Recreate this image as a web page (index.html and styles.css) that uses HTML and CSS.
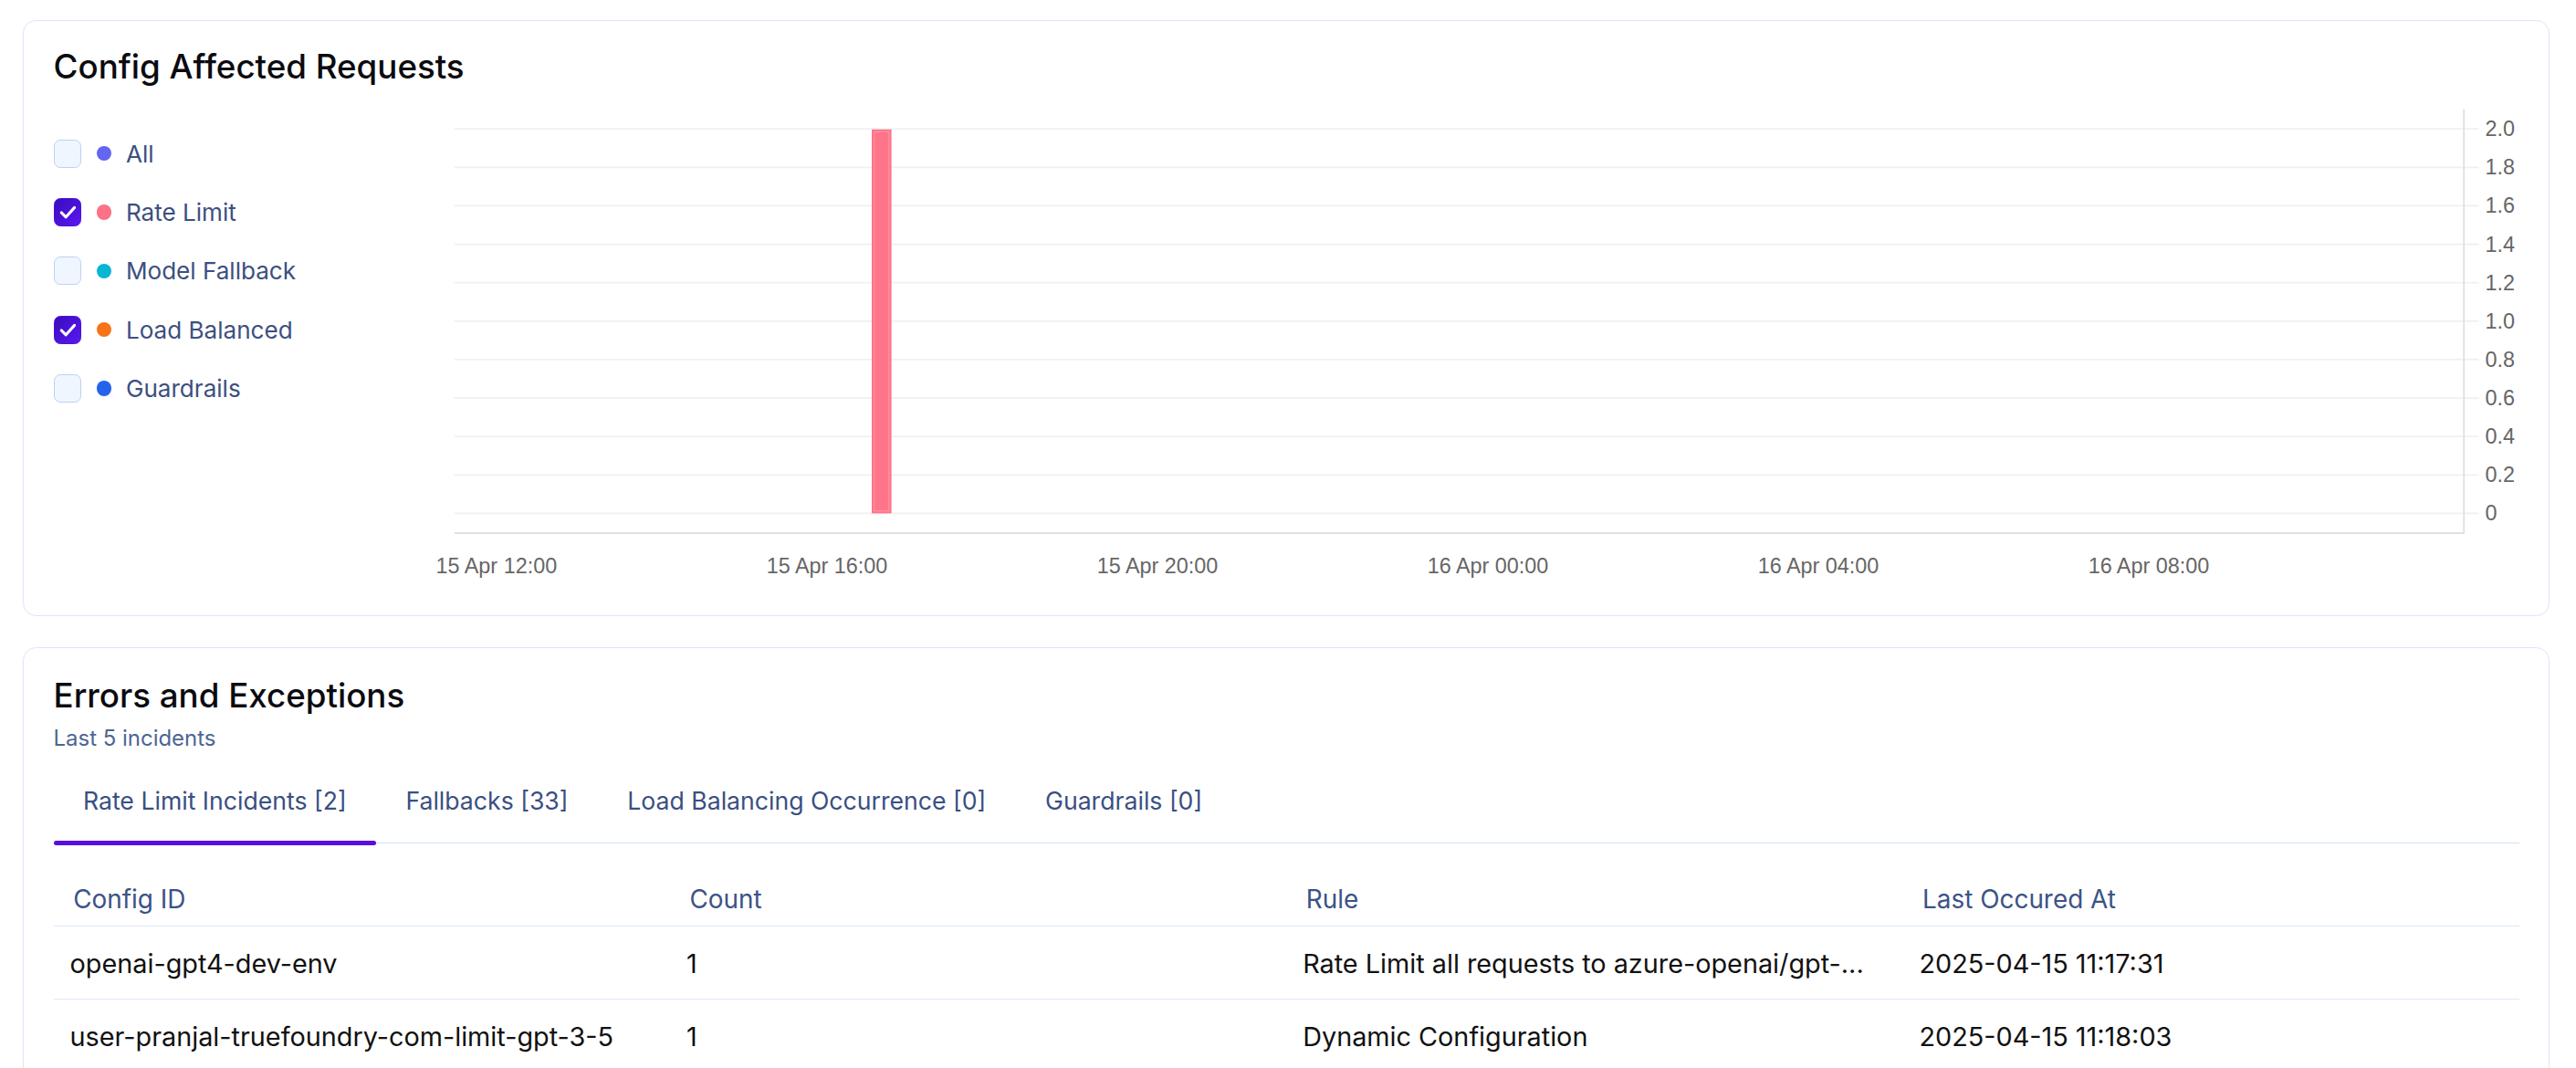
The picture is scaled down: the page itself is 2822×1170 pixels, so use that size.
FILE: index.html
```html
<!DOCTYPE html>
<html lang="en">
<head>
  <meta charset="UTF-8">
  <meta name="viewport" content="width=device-width, initial-scale=1.0">
  <title>Config Metrics</title>
  <link rel="stylesheet" href="styles.css">
</head>
<body>
  <div class="page">
    <div class="card">
      <h2 class="cardTitle">Config Affected Requests</h2>
      <div class="chartRow">
        <ul class="legend">
          <li><span class="box"></span><i class="dot" style="background:#6366f1"></i>All</li>
          <li><span class="box on"><svg viewBox="0 0 16 16"><polyline points="4,8.3 6.8,11 12,5.2"/></svg></span><i class="dot" style="background:#fb7185"></i>Rate Limit</li>
          <li><span class="box"></span><i class="dot" style="background:#06b6d4"></i>Model Fallback</li>
          <li><span class="box on"><svg viewBox="0 0 16 16"><polyline points="4,8.3 6.8,11 12,5.2"/></svg></span><i class="dot" style="background:#f97316"></i>Load Balanced</li>
          <li><span class="box"></span><i class="dot" style="background:#2563eb"></i>Guardrails</li>
        </ul>
        <svg class="chart" width="1283" height="300" viewBox="0 0 1283 300">
          <g class="grid">
            <line x1="26" x2="1258" y1="19" y2="19"/>
            <line x1="26" x2="1258" y1="42.4" y2="42.4"/>
            <line x1="26" x2="1258" y1="65.8" y2="65.8"/>
            <line x1="26" x2="1258" y1="89.2" y2="89.2"/>
            <line x1="26" x2="1258" y1="112.6" y2="112.6"/>
            <line x1="26" x2="1258" y1="136" y2="136"/>
            <line x1="26" x2="1258" y1="159.4" y2="159.4"/>
            <line x1="26" x2="1258" y1="182.8" y2="182.8"/>
            <line x1="26" x2="1258" y1="206.2" y2="206.2"/>
            <line x1="26" x2="1258" y1="229.6" y2="229.6"/>
            <line x1="26" x2="1258" y1="253" y2="253"/>
          </g>
          <g class="axis">
            <line x1="1249" x2="1249" y1="7" y2="265.5"/>
            <line x1="26" x2="1249" y1="265" y2="265"/>
          </g>
          <rect class="bar" x="280" y="19.3" width="12" height="233.7"/>
          <rect class="barEdge" x="281.5" y="20.8" width="9" height="230.7"/>
          <g class="ylabels">
            <text x="1262" y="19">2.0</text>
            <text x="1262" y="42.4">1.8</text>
            <text x="1262" y="65.8">1.6</text>
            <text x="1262" y="89.2">1.4</text>
            <text x="1262" y="112.6">1.2</text>
            <text x="1262" y="136">1.0</text>
            <text x="1262" y="159.4">0.8</text>
            <text x="1262" y="182.8">0.6</text>
            <text x="1262" y="206.2">0.4</text>
            <text x="1262" y="229.6">0.2</text>
            <text x="1262" y="253">0</text>
          </g>
          <g class="xlabels">
            <text x="51.6" y="289.5">15 Apr 12:00</text>
            <text x="252.8" y="289.5">15 Apr 16:00</text>
            <text x="453.9" y="289.5">15 Apr 20:00</text>
            <text x="655" y="289.5">16 Apr 00:00</text>
            <text x="856.1" y="289.5">16 Apr 04:00</text>
            <text x="1057.2" y="289.5">16 Apr 08:00</text>
          </g>
        </svg>
      </div>
    </div>

    <div class="card">
      <h2 class="cardTitle">Errors and Exceptions</h2>
      <p class="sub">Last 5 incidents</p>
      <div class="tabs">
        <span class="tab active">Rate Limit Incidents [2]</span>
        <span class="tab">Fallbacks [33]</span>
        <span class="tab">Load Balancing Occurrence [0]</span>
        <span class="tab">Guardrails [0]</span>
      </div>
      <table class="incidents">
        <thead>
          <tr><th>Config ID</th><th>Count</th><th>Rule</th><th>Last Occured At</th></tr>
        </thead>
        <tbody>
          <tr><td>openai-gpt4-dev-env</td><td>1</td><td>Rate Limit all requests to azure-openai/gpt-...</td><td>2025-04-15 11:17:31</td></tr>
          <tr><td>user-pranjal-truefoundry-com-limit-gpt-3-5</td><td>1</td><td>Dynamic Configuration</td><td>2025-04-15 11:18:03</td></tr>
        </tbody>
      </table>
    </div>
  </div>
</body>
</html>
```
FILE: styles.css
```css
html{ zoom: 1.8;}
body{ margin: 0; background: #fff; font-family: "Inter", "Open Sans", sans-serif; color: #111;}
.page{ padding: 12px 16px 0 14px; display: flex; flex-direction: column; gap: 19px;}

.card{ border: 1px solid #d9e6fb; border-radius: 8px; padding: 14px 18px 15px; background: #fff;}
.card + .card{ padding-top: 15px;}
.cardTitle{ margin: 0; font-size: 20.4px; line-height: 28px; font-weight: 500; color: #0b0b10;}

/* chart card */
.chartRow{ display: flex; margin-top: 5px;}
.legend{ list-style: none; margin: 0; padding: 16px 0 0; width: 218px; flex: none;}
.legend li{ height: 35.75px; display: flex; align-items: center; gap: 9px; font-size: 14.5px; color: #3c5080;}
.box{ width: 16px; height: 16px; border: 1px solid #bcd1f2; border-radius: 4px; background: #eff6ff; flex: none; display: flex;}
.box.on{ border-color: #4a10dc; background: linear-gradient(135deg, #3a0cbc, #5a18f2);}
.box svg{ width: 16px; height: 16px;}
.box polyline{ fill: none; stroke: #fff; stroke-width: 1.7; stroke-linecap: round; stroke-linejoin: round;}
.dot{ width: 9px; height: 9px; border-radius: 50%; flex: none;}

.chart{ flex: none; display: block;}
.grid line{ stroke: #f0f0f0; stroke-width: 1;}
.axis line{ stroke: #e0e0e0; stroke-width: 1;}
.bar{ fill: #ff7489;}
.barEdge{ fill: none; stroke: #ff97a6; stroke-width: 0.6;}
.ylabels text, .xlabels text{ font-family: "Liberation Sans", Arial, sans-serif; font-size: 13px; fill: #666;}
.ylabels text{ dominant-baseline: central;}
.xlabels text{ text-anchor: middle;}

/* errors card */
.sub{ margin: 2px 0 0; font-size: 13.3px; line-height: 20px; color: #4d6594;}
.tabs{ display: flex; border-bottom: 1px solid #d3e2f8; margin-top: 3px;}
.tab{ padding: 13px 18px 13px; font-size: 14.8px; line-height: 24px; color: #3a4f82; position: relative;}
.tab.active::after{ content: ""; position: absolute; left: 0; right: 0; bottom: -2px; height: 3px; border-radius: 2px; background: #5a0de0;}

.incidents{ width: 100%; border-collapse: collapse; table-layout: fixed; margin-top: 12px;}
.incidents th{ text-align: left; font-weight: 400; font-size: 15.5px; line-height: 20px; color: #3c5386; padding: 12px 12px 6px; border-bottom: 1px solid #dde9fb;}
.incidents td{ font-size: 16px; line-height: 20px; padding: 13px 10px 11px; border-bottom: 1px solid #dde9fb; white-space: nowrap; overflow: hidden; text-overflow: ellipsis;}
```
